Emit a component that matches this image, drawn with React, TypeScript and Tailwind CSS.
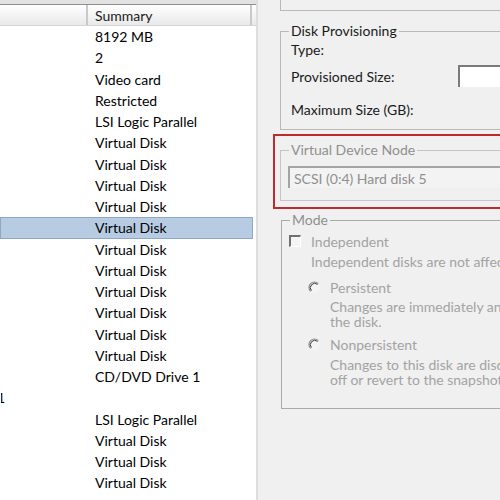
import React from "react"

const rows: string[] = [
  "8192 MB",
  "2",
  "Video card",
  "Restricted",
  "LSI Logic Parallel",
  "Virtual Disk",
  "Virtual Disk",
  "Virtual Disk",
  "Virtual Disk",
  "Virtual Disk",
  "Virtual Disk",
  "Virtual Disk",
  "Virtual Disk",
  "Virtual Disk",
  "Virtual Disk",
  "Virtual Disk",
  "CD/DVD Drive 1",
  "",
  "LSI Logic Parallel",
  "Virtual Disk",
  "Virtual Disk",
  "Virtual Disk",
]

const SELECTED = 9

function Radio() {
  return (
    <svg width="13" height="13" viewBox="0 0 13 13" className="shrink-0">
      <circle cx="6.5" cy="6.5" r="5.5" fill="#f4f4f4" />
      <path d="M2.6 10.4 A5.5 5.5 0 0 1 10.4 2.6" fill="none" stroke="#8c8c8c" strokeWidth="1.2" />
      <path d="M3.4 9.6 A4.4 4.4 0 0 1 9.6 3.4" fill="none" stroke="#3a3a3a" strokeWidth="1" />
    </svg>
  )
}

function GroupLabel({ children, muted }: { children: React.ReactNode; muted?: boolean }) {
  return (
    <span
      className={`absolute -top-[9px] left-[8px] bg-[#f0f0f0] px-[2px] leading-[16px] ${
        muted ? "text-[#8f8f8f]" : "text-[#1a1a1a]"
      }`}
    >
      {children}
    </span>
  )
}

export default function App() {
  return (
    <div
      className="w-[500px] h-[500px] overflow-hidden flex text-[14px] bg-[#f0f0f0]"
      style={{ fontFamily: "Lato, 'Liberation Sans', sans-serif" }}
    >
      {/* device list */}
      <div className="w-[256px] shrink-0 bg-white flex flex-col">
        <div className="h-[4px] shrink-0 bg-[#e2e2e2]" />
        <div className="h-[22px] shrink-0 flex border-t border-[#8e8e8e] border-b border-b-[#d5d5d5] bg-gradient-to-b from-white to-[#e9e9e9]">
          <div className="w-[88px] border-r-2 border-[#c9c9c9]" />
          <div className="w-[164px] pl-[7px] flex items-center text-[#1a1a1a] border-r-2 border-[#c9c9c9]">Summary</div>
        </div>
        {rows.map((r, i) => (
          <div
            key={i}
            className={`h-[21.25px] shrink-0 flex items-center w-[253px] ${
              i === SELECTED ? "bg-[#b7cbe3] border border-[#8ea7c6]" : "border border-transparent"
            }`}
          >
            <div className="w-[88px] overflow-hidden">
              {i === 17 && <span className="block -ml-[4px] text-black">1</span>}
            </div>
            <div className="pl-[6px] whitespace-nowrap text-black">{r}</div>
          </div>
        ))}
      </div>

      {/* properties panel */}
      <div className="flex-1 min-w-0 overflow-hidden border-l-2 border-[#dedede] pl-[22px] flex flex-col whitespace-nowrap">
        <div className="h-[11px] shrink-0 border-l border-b border-[#b9b9b9] -mr-4" />

        <div className="relative mt-[20px] h-[99px] shrink-0 border border-[#b9b9b9] -mr-4 pl-[10px] pt-[10px] text-[#1a1a1a]">
          <GroupLabel>Disk Provisioning</GroupLabel>
          <div className="leading-[16px]">Type:</div>
          <div className="mt-[7px] h-[22px] flex items-center">
            <span>Provisioned Size:</span>
            <div className="ml-[64px] h-[22px] w-[60px] bg-white border-t-2 border-l-2 border-[#7a7a7a]" />
          </div>
          <div className="mt-[15px] leading-[16px]">Maximum Size (GB):</div>
        </div>

        <div className="mt-[4px] shrink-0 -ml-[7px] -mr-4 border-2 border-[#bf2a2f] pl-[5px] pt-[14px] pb-[6px]">
          <div className="relative h-[51px] border border-[#c4c4c4] pt-[15px] pl-[7px]">
            <GroupLabel muted>Virtual Device Node</GroupLabel>
            <div className="h-[22px] flex items-center pl-[4px] bg-[#f3f3f3] border-t-2 border-l-2 border-[#a3a3a3] text-[#8f8f8f]">
              SCSI (0:4) Hard disk 5
            </div>
          </div>
        </div>

        <div className="relative mt-[11px] ml-px h-[189px] shrink-0 border border-[#a9a9a9] -mr-4 pt-[12px] pl-[7px] text-[#a3a3a3]">
          <GroupLabel muted>Mode</GroupLabel>
          <div className="h-[16px] flex items-center">
            <div className="w-[12px] h-[12px] border-t-2 border-l-2 border-[#707070] bg-[#f4f4f4] border-r border-b border-r-white border-b-white" />
            <span className="ml-[10px]">Independent</span>
          </div>
          <div className="mt-[5px] pl-[22px] leading-[16px]">Independent disks are not affected by snapshots.</div>
          <div className="mt-[9px] pl-[19px] h-[16px] flex items-center">
            <Radio />
            <span className="ml-[9px]">Persistent</span>
          </div>
          <div className="mt-[4px] pl-[41px] leading-[15px]">
            <div>Changes are immediately and permanently written to</div>
            <div>the disk.</div>
          </div>
          <div className="mt-[7px] pl-[19px] h-[16px] flex items-center">
            <Radio />
            <span className="ml-[9px]">Nonpersistent</span>
          </div>
          <div className="mt-[5px] pl-[41px] leading-[15px]">
            <div>Changes to this disk are discarded when you power</div>
            <div>off or revert to the snapshot.</div>
          </div>
        </div>
      </div>
    </div>
  )
}
